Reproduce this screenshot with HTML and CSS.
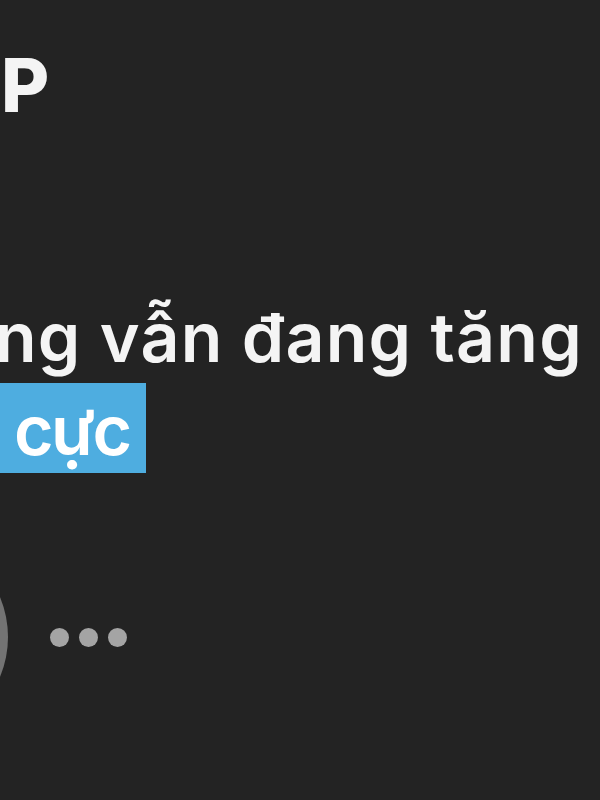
FILE: index.html
```html
<!DOCTYPE html>
<html lang="vi">
<head>
  <meta charset="UTF-8">
  <title>Tin tức</title>
  <link rel="stylesheet" href="styles.css">
</head>
<body>
  <div class="page">
    <h1 class="brand">P</h1>
    <p class="headline">ng vẫn đang tăng <span class="mark">cực</span></p>
    <div class="meta">
      <div class="avatar"></div>
      <div class="more">
        <span class="dot"></span>
        <span class="dot"></span>
        <span class="dot"></span>
      </div>
    </div>
  </div>
</body>
</html>
```

FILE: styles.css
```css
html, body {
  margin: 0;
  padding: 0;
}

body {
  background: #232323;
  font-family: Inter, 'Noto Sans', sans-serif;
  color: #f4f4f4;
  height: 800px;
  overflow: hidden;
}

.page {
  width: 600px;
  overflow: hidden;
}

.brand {
  margin: 40px 0 0 0;
  padding-left: 1px;
  font-size: 74px;
  font-weight: 800;
  line-height: 90px;
}

.headline {
  margin: 161px 0 0 -5px;
  width: 605px;
  font-size: 68px;
  font-weight: 600;
  line-height: 93px;
  letter-spacing: 1.2px;
}

.mark {
  background: #4eade0;
  color: #ffffff;
  padding: 6px 16px 2px 24px;
  margin-left: -5px;
  letter-spacing: -2.5px;
}

.meta {
  display: flex;
  align-items: center;
  margin-top: 56px;
}

.avatar {
  width: 208px;
  height: 208px;
  margin-left: -200px;
  border-radius: 50%;
  background: #737373;
  flex-shrink: 0;
}

.more {
  display: flex;
  gap: 10px;
  margin-left: 42px;
}

.dot {
  width: 19px;
  height: 19px;
  border-radius: 50%;
  background: #a4a4a4;
}
```
